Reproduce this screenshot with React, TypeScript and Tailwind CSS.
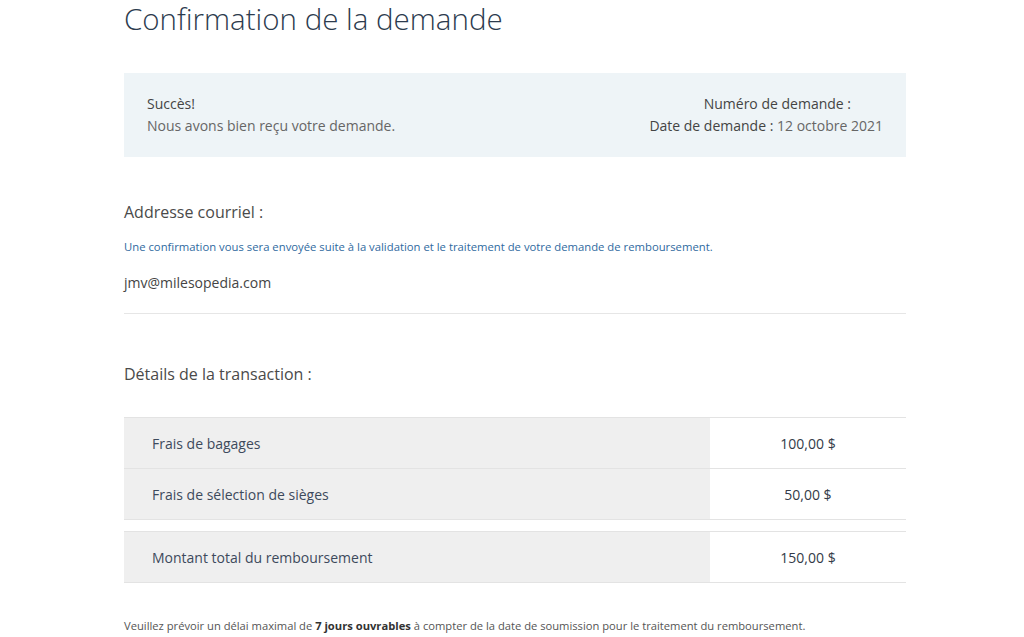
import React from 'react'

const rows = [
  { label: 'Frais de bagages', amount: '100,00 $' },
  { label: 'Frais de sélection de sièges', amount: '50,00 $' },
]

function Row({ label, amount }: { label: string; amount: string }) {
  return (
    <div className="flex h-[51px] border-b border-[#e3e3e3]">
      <div className="flex flex-1 items-center bg-[#efefef] pl-[28px] text-[14px] text-[#3d4a5c]">{label}</div>
      <div className="flex w-[196px] items-center justify-center text-[14px] text-[#333b48]">{amount}</div>
    </div>
  )
}

export default function App() {
  return (
    <div className="min-h-[637px] bg-white font-['Open_Sans','Noto_Sans',sans-serif]">
      <div className="ml-[124px] w-[782px]">
        <h1 className="text-[29.5px] font-light leading-[37px] text-[#2c3b4e]">Confirmation de la demande</h1>

        <div className="mt-[36px] flex h-[84px] items-center justify-between bg-[#eef4f7] px-[23px]">
          <div className="text-[14px] leading-[22px]">
            <p className="text-[#444]">Succès!</p>
            <p className="text-[#666]">Nous avons bien reçu votre demande.</p>
          </div>
          <div className="text-right text-[14px] leading-[22px] text-[#444]">
            <p className="pr-[32px]">Numéro de demande :</p>
            <p>
              Date de demande : <span className="text-[#666]">12 octobre 2021</span>
            </p>
          </div>
        </div>

        <h2 className="mt-[44px] text-[16px] leading-[22px] text-[#4a4a4a]">Addresse courriel :</h2>
        <p className="mt-[17px] text-[11.3px] leading-[14px] text-[#2f6aa0]">
          Une confirmation vous sera envoyée suite à la validation et le traitement de votre demande de remboursement.
        </p>
        <p className="mt-[20px] text-[14px] leading-[18px] text-[#444]">jmv@milesopedia.com</p>
        <div className="mt-[21px] border-b border-[#e6e6e6]" />

        <h2 className="mt-[49px] text-[16px] leading-[22px] text-[#4a4a4a]">Détails de la transaction :</h2>

        <div className="mt-[32px] border-t border-[#e3e3e3]">
          {rows.map(r => (
            <Row key={r.label} {...r} />
          ))}
        </div>
        <div className="mt-[11px] border-t border-[#e3e3e3]">
          <Row label="Montant total du remboursement" amount="150,00 $" />
        </div>

        <p className="mt-[36px] text-[11.2px] leading-[14px] text-[#555]">
          Veuillez prévoir un délai maximal de <b className="text-[#333]">7 jours ouvrables</b> à compter de la date de soumission pour le traitement du remboursement.
        </p>
      </div>
    </div>
  )
}
